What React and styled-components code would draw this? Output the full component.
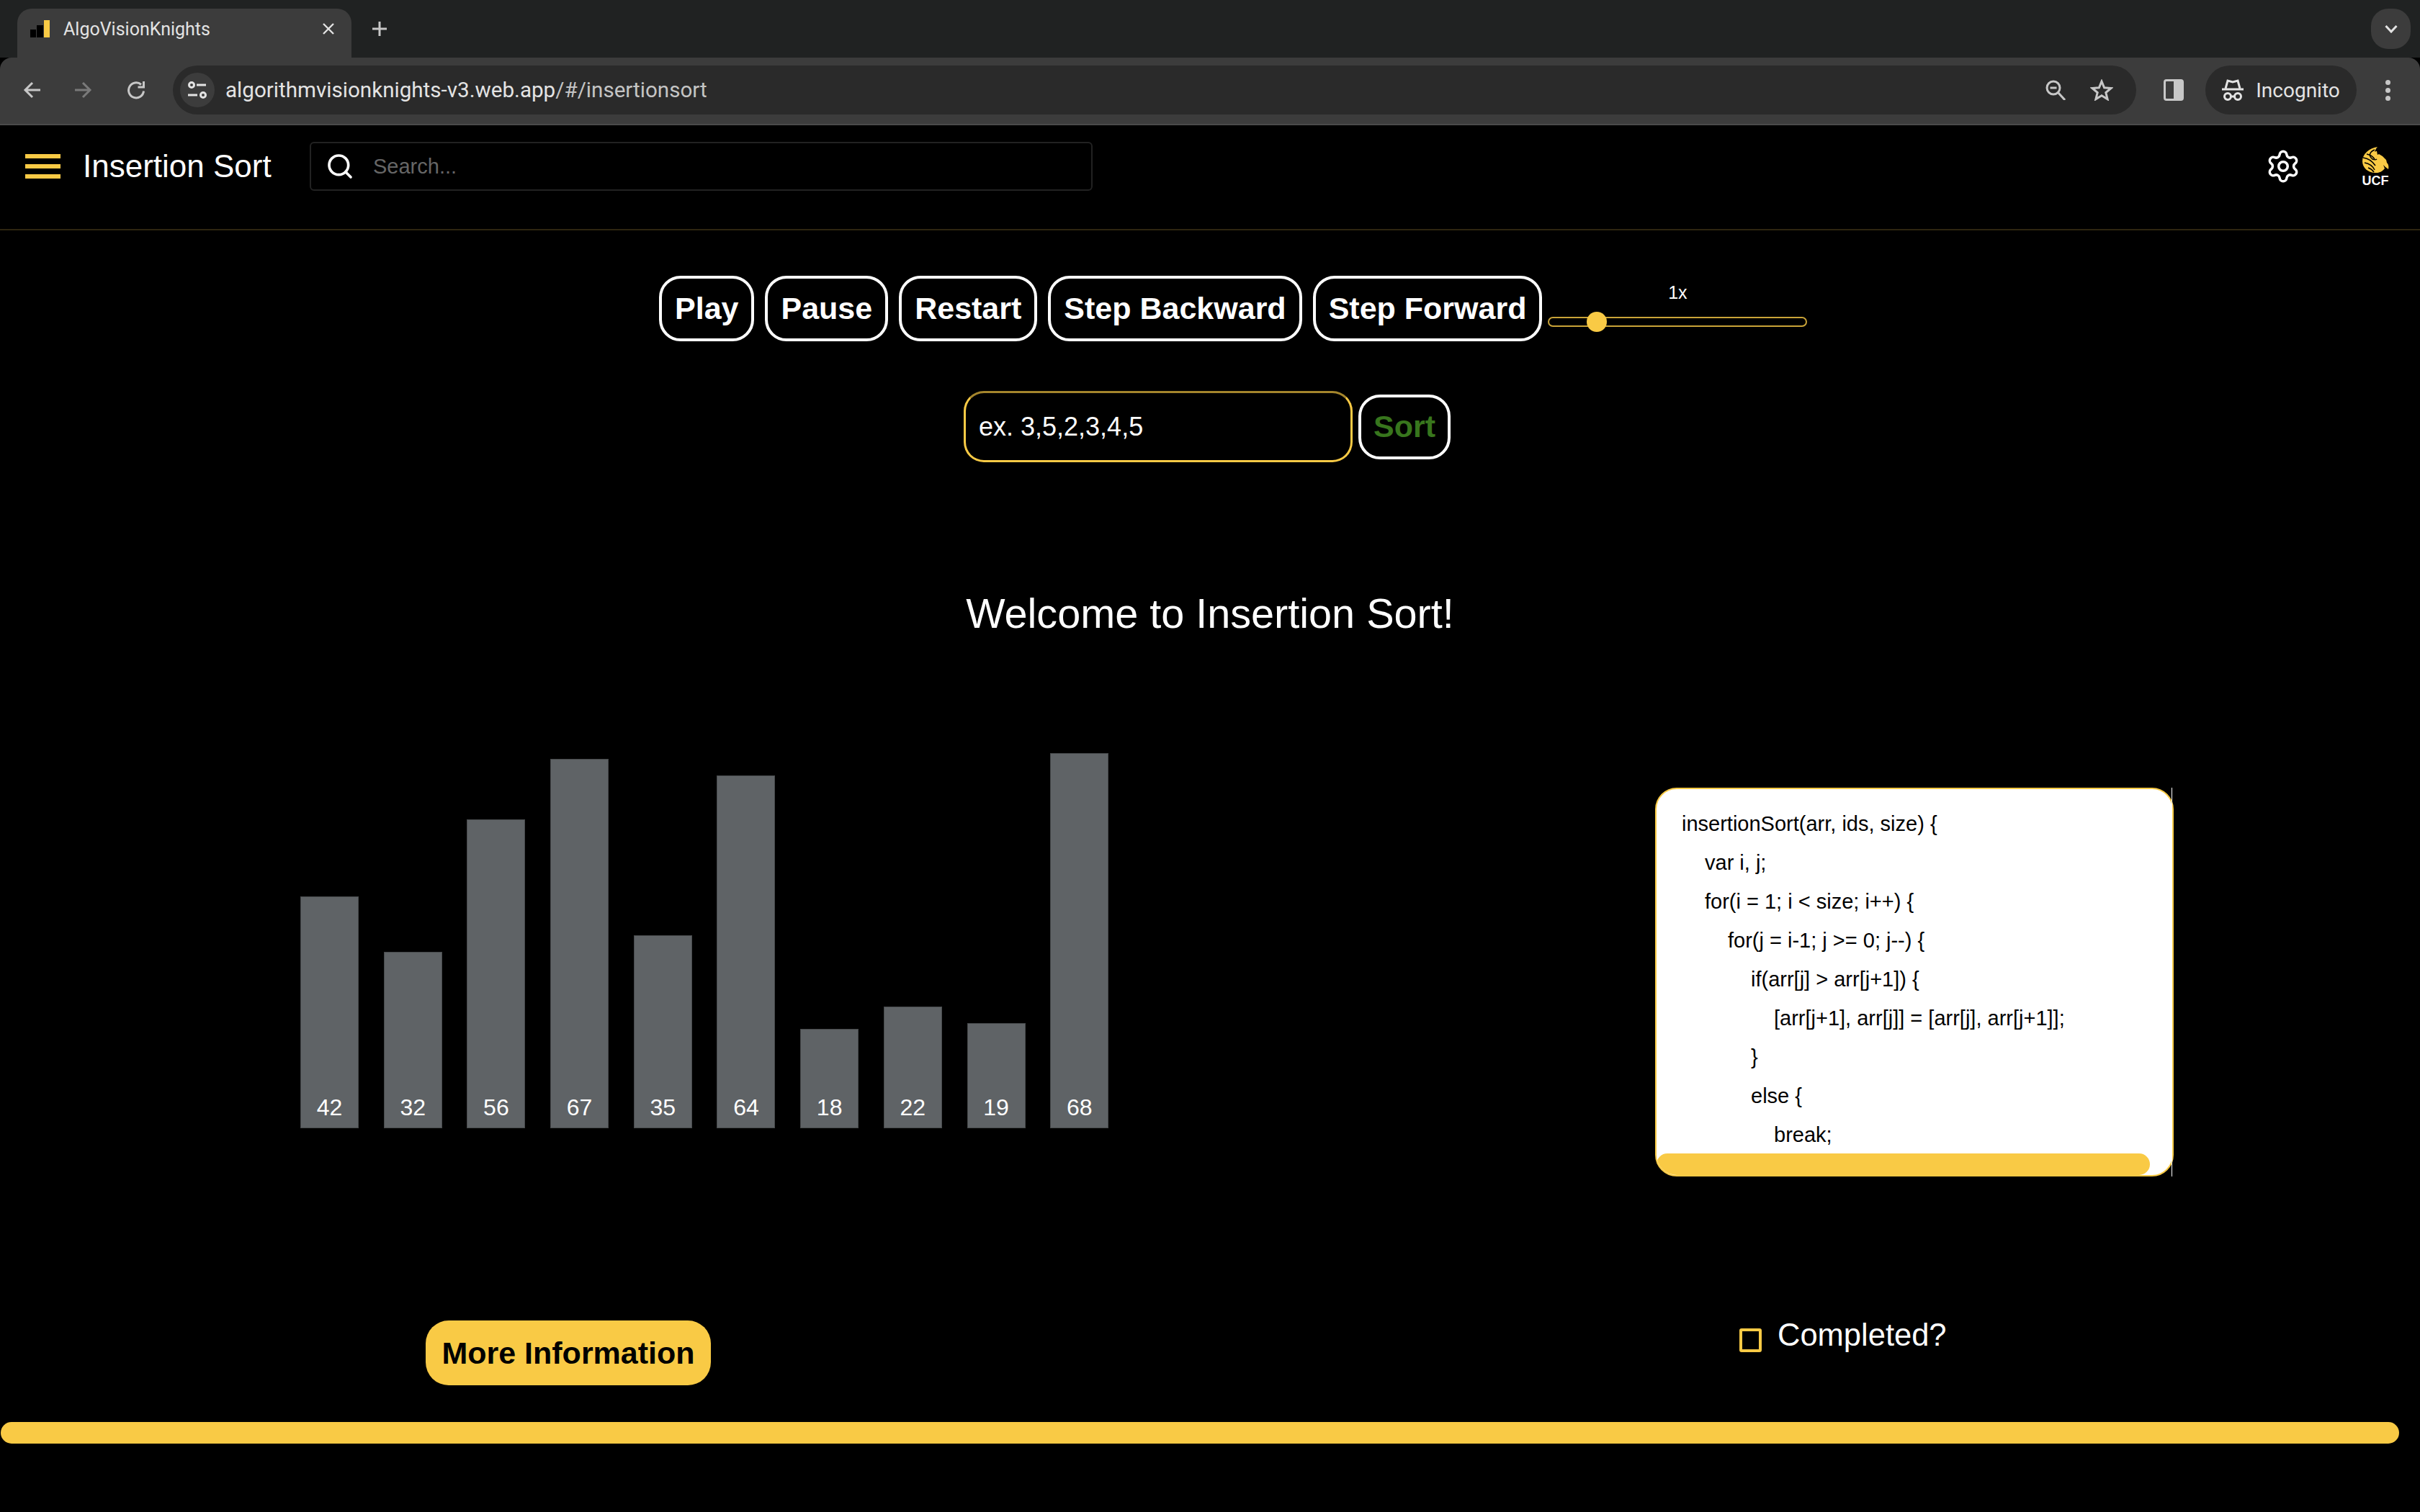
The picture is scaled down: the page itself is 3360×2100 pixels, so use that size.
import React from 'react';
import styled, { createGlobalStyle } from 'styled-components';
import { Search, Settings } from 'lucide-react';

const GOLD = '#f9ca45';
const SANS = '"Liberation Sans", Arial, sans-serif';

const bars = [42, 32, 56, 67, 35, 64, 18, 22, 19, 68];

const codeLines = [
    [0, 'insertionSort(arr, ids, size) {'],
    [1, 'var i, j;'],
    [1, 'for(i = 1; i < size; i++) {'],
    [2, 'for(j = i-1; j >= 0; j--) {'],
    [3, 'if(arr[j] > arr[j+1]) {'],
    [4, '[arr[j+1], arr[j]] = [arr[j], arr[j+1]];'],
    [3, '}'],
    [3, 'else {'],
    [4, 'break;'],
];

const controls = ['Play', 'Pause', 'Restart', 'Step Backward', 'Step Forward'];

function App() {
    return (
        <Page>
            <GlobalStyle />
            <TabStrip>
                <Tab>
                    <svg width="28" height="24" viewBox="0 0 28 24">
                        <rect x="0" y="13" width="8" height="11" fill="#000" />
                        <rect x="9" y="7" width="9" height="17" fill="#000" />
                        <rect x="19" y="0" width="8" height="24" fill={GOLD} />
                    </svg>
                    <TabTitle>AlgoVisionKnights</TabTitle>
                    <svg width="16" height="16" viewBox="0 0 16 16" stroke="#e3e3e3" strokeWidth="2.4">
                        <path d="M1 1l14 14M15 1L1 15" />
                    </svg>
                </Tab>
                <NewTab>
                    <svg width="22" height="22" viewBox="0 0 22 22" stroke="#c7c7c7" strokeWidth="3">
                        <path d="M11 1v20M1 11h20" />
                    </svg>
                </NewTab>
                <TabSearch>
                    <svg width="18" height="12" viewBox="0 0 18 12" fill="none" stroke="#e3e3e3" strokeWidth="3">
                        <path d="M1.500 2l7.500 8 7.500-8" />
                    </svg>
                </TabSearch>
            </TabStrip>
            <Toolbar>
                <NavIcons>
                    <svg width="24" height="24" viewBox="0 0 24 24" fill="none" stroke="#c7c7c7" strokeWidth="3">
                        <path d="M24 12H3M13 2L3 12l10 10" />
                    </svg>
                    <svg width="24" height="24" viewBox="0 0 24 24" fill="none" stroke="#7a7a7a" strokeWidth="3">
                        <path d="M0 12h21M11 2l10 10-10 10" />
                    </svg>
                    <svg width="26" height="26" viewBox="0 0 26 26" fill="none" stroke="#c7c7c7" strokeWidth="3">
                        <path d="M23.500 14.500a10.500 10.500 0 1 1-3.500-9" />
                        <path d="M23.500 1v8h-8" />
                    </svg>
                </NavIcons>
                <AddressBar>
                    <SiteChip>
                        <svg width="26" height="24" viewBox="0 0 26 24" fill="none" stroke="#e3e3e3" strokeWidth="3">
                            <circle cx="5" cy="5" r="3.500" />
                            <path d="M12 5h13M0 19h13" />
                            <circle cx="21" cy="19" r="3.500" />
                        </svg>
                    </SiteChip>
                    <UrlText>
                        algorithmvisionknights-v3.web.app<UrlPath>/#/insertionsort</UrlPath>
                    </UrlText>
                    <svg width="28" height="28" viewBox="0 0 28 28" fill="none" stroke="#c7c7c7" strokeWidth="3">
                        <circle cx="11" cy="11" r="9" />
                        <path d="M6.500 11h9M17.500 17.500L27 28" />
                    </svg>
                    <svg width="32" height="30" viewBox="0 0 32 30" fill="none" stroke="#c7c7c7" strokeWidth="3">
                        <path d="M16 3l3.600 8.800 9.400.7-7.200 6 2.300 9.200-8.100-5-8.100 5 2.300-9.200-7.200-6 9.400-.7z" />
                    </svg>
                </AddressBar>
                <SidePanelIcon>
                    <svg width="28" height="30" viewBox="0 0 28 30">
                        <rect x="1.500" y="1.500" width="25" height="27" rx="2.500" fill="none" stroke="#c7c7c7" strokeWidth="3" />
                        <rect x="14" y="1.500" width="13" height="27" rx="1" fill="#c7c7c7" />
                    </svg>
                </SidePanelIcon>
                <IncognitoChip>
                    <svg width="30" height="32" viewBox="0 0 30 32" fill="none" stroke="#e3e3e3" strokeWidth="3">
                        <path d="M0 15h30" />
                        <path d="M5 14l3-11 7 2 7-2 3 11" />
                        <circle cx="8" cy="25" r="4.500" />
                        <circle cx="22" cy="25" r="4.500" />
                        <path d="M12.500 25h5" />
                    </svg>
                    <ChipText>Incognito</ChipText>
                </IncognitoChip>
                <MenuDots>
                    <Dot />
                    <Dot />
                    <Dot />
                </MenuDots>
            </Toolbar>

            <Header>
                <Hamburger>
                    <span />
                    <span />
                    <span />
                </Hamburger>
                <Title>Insertion Sort</Title>
                <SearchBox>
                    <Search size={40} color="#fff" strokeWidth={2.2} />
                    <SearchText>Search...</SearchText>
                </SearchBox>
                <HeaderRight>
                    <Settings size={50} color="#fff" strokeWidth={1.7} />
                    <UcfLogo>
                        <svg width="37" height="36" viewBox="0 0 37 36">
                            <path fill={GOLD} d="M21 0C9 2 0 10 0 20c0 9 8 16 18 16 6 0 10-2 13-6l-2-5 3 3 4 3c1-4 0-7-2-9l-1-4-5-5-5-3-2 1-1-5c-1 0-2 0-3 1 1-3 2-5 4-7z" />
                            <g fill="none" stroke="#000" strokeWidth="1.500">
                                <path d="M17 4C10 7 8 12 14 17c2 1 5 1 6 0" />
                                <path d="M1 15c7 1 13 5 17 11M3 22c6 1 11 4 14 10M8 29c3 1 6 3 8 6M6 10c5 1 9 4 11 7" />
                            </g>
                            <circle cx="24" cy="6" r="1.200" fill="#000" />
                        </svg>
                        <UcfText>UCF</UcfText>
                    </UcfLogo>
                </HeaderRight>
            </Header>

            <ControlRow>
                {controls.map((label) => (
                    <OutlineButton key={label}>{label}</OutlineButton>
                ))}
                <SpeedControl>
                    <SpeedLabel>1x</SpeedLabel>
                    <SliderTrack>
                        <SliderThumb />
                    </SliderTrack>
                </SpeedControl>
            </ControlRow>

            <SortRow>
                <ArrayInput>ex. 3,5,2,3,4,5</ArrayInput>
                <SortButton>Sort</SortButton>
            </SortRow>

            <Welcome>Welcome to Insertion Sort!</Welcome>

            <VizRow>
                <Chart>
                    {bars.map((value, i) => (
                        <Bar key={i} style={{ height: value * 7.66 }}>
                            {value}
                        </Bar>
                    ))}
                </Chart>
                <CodeFrame>
                    <CodePanel>
                        <CodeBody>
                            {codeLines.map(([indent, text], i) => (
                                <CodeLine key={i} $indent={indent}>
                                    {text}
                                </CodeLine>
                            ))}
                        </CodeBody>
                        <CodeScrollThumb />
                    </CodePanel>
                    <EdgeLine />
                </CodeFrame>
            </VizRow>

            <FooterRow>
                <MoreInfo>More Information</MoreInfo>
                <CompletedGroup>
                    <CheckBox />
                    <CompletedLabel>Completed?</CompletedLabel>
                </CompletedGroup>
            </FooterRow>

            <PageScrollThumb />
        </Page>
    );
}

const GlobalStyle = createGlobalStyle`
    html, body {
        margin: 0;
        padding: 0;
        background: #000;
        overflow: hidden;
    }
`;

const Page = styled.div`
    width: 3360px;
    height: 2100px;
    background: #000;
    color: #fff;
    font-family: ${SANS};
    display: flex;
    flex-direction: column;
    overflow: hidden;
`;

const TabStrip = styled.div`
    height: 80px;
    background: #202222;
    display: flex;
    align-items: flex-end;
    padding-left: 24px;
    padding-right: 13px;
`;

const Tab = styled.div`
    width: 464px;
    height: 68px;
    background: #3c3c3c;
    border-radius: 20px 20px 0 0;
    box-sizing: border-box;
    padding: 0 24px 12px 18px;
    display: flex;
    align-items: center;
    gap: 18px;
`;

const TabTitle = styled.span`
    flex: 1;
    font-family: Roboto, ${SANS};
    font-size: 25px;
    color: #e3e3e3;
`;

const NewTab = styled.div`
    margin-left: 28px;
    height: 68px;
    padding-bottom: 12px;
    box-sizing: border-box;
    display: flex;
    align-items: center;
`;

const TabSearch = styled.div`
    margin-left: auto;
    width: 55px;
    height: 56px;
    align-self: flex-start;
    margin-top: 12px;
    background: #3c3c3c;
    border-radius: 24px;
    display: flex;
    align-items: center;
    justify-content: center;
`;

const Toolbar = styled.div`
    height: 94px;
    box-sizing: border-box;
    background: #3c3c3c;
    border-bottom: 2px solid #4a4a4a;
    border-radius: 16px 16px 0 0;
    padding: 12px 28px 14px 32px;
    display: flex;
    align-items: center;
`;

const NavIcons = styled.div`
    width: 208px;
    display: flex;
    align-items: center;
    gap: 48px;
`;

const AddressBar = styled.div`
    width: 2726px;
    height: 68px;
    box-sizing: border-box;
    flex-shrink: 0;
    background: #2a2a2a;
    border-radius: 34px;
    display: flex;
    align-items: center;
    padding: 0 32px 0 10px;
    gap: 34px;
`;

const SiteChip = styled.div`
    width: 48px;
    height: 48px;
    border-radius: 50%;
    background: #3c3c3c;
    display: flex;
    align-items: center;
    justify-content: center;
    margin-right: -19px;
`;

const UrlText = styled.span`
    flex: 1;
    font-family: Roboto, ${SANS};
    font-size: 29.600px;
    color: #e3e3e3;
`;

const UrlPath = styled.span`
    color: #c4c4c4;
`;

const SidePanelIcon = styled.div`
    margin-left: 38px;
    display: flex;
`;

const IncognitoChip = styled.div`
    margin-left: 30px;
    width: 210px;
    height: 68px;
    box-sizing: border-box;
    background: #2a2a2a;
    border-radius: 34px;
    display: flex;
    align-items: center;
    justify-content: center;
    gap: 17px;
    flex-shrink: 0;
`;

const ChipText = styled.span`
    font-family: Roboto, ${SANS};
    font-size: 28px;
    color: #e3e3e3;
`;

const MenuDots = styled.div`
    margin-left: 40px;
    display: flex;
    flex-direction: column;
    gap: 4px;
`;

const Dot = styled.span`
    width: 7px;
    height: 7px;
    border-radius: 50%;
    background: #c7c7c7;
`;

const Header = styled.div`
    height: 146px;
    box-sizing: border-box;
    border-bottom: 2px solid #2e2610;
    padding: 23px 43px 53px 35px;
    display: flex;
    align-items: center;
`;

const Hamburger = styled.div`
    width: 49px;
    display: flex;
    flex-direction: column;
    gap: 8px;

    span {
        display: block;
        height: 6px;
        background: ${GOLD};
    }
`;

const Title = styled.h1`
    margin: 0 0 0 31px;
    width: 315px;
    font-size: 44px;
    font-weight: 400;
`;

const SearchBox = styled.div`
    width: 1087px;
    height: 68px;
    box-sizing: border-box;
    border: 2px solid #222;
    border-radius: 6px;
    display: flex;
    align-items: center;
    padding-left: 20px;
    gap: 26px;
`;

const SearchText = styled.span`
    font-size: 29px;
    color: #666;
`;

const HeaderRight = styled.div`
    margin-left: auto;
    display: flex;
    align-items: center;
    gap: 84px;
`;

const UcfLogo = styled.div`
    display: flex;
    flex-direction: column;
    align-items: center;
    gap: 2px;
    width: 38px;
    margin-top: 2px;
`;

const UcfText = styled.span`
    font-size: 18px;
    font-weight: 700;
    line-height: 18px;
`;

const ControlRow = styled.div`
    margin-top: 63px;
    padding-left: 915px;
    display: flex;
    align-items: center;
    gap: 15px;
`;

const OutlineButton = styled.button`
    height: 91px;
    box-sizing: border-box;
    padding: 0 18px;
    background: #000;
    color: #fff;
    border: 4px solid #fff;
    border-radius: 30px;
    font-family: ${SANS};
    font-size: 43px;
    font-weight: 700;
    white-space: nowrap;
`;

const SpeedControl = styled.div`
    width: 360px;
    margin-left: -7px;
    display: flex;
    flex-direction: column;
    align-items: center;
    margin-top: -9px;
`;

const SpeedLabel = styled.span`
    font-size: 25px;
    line-height: 28px;
    margin-bottom: 20px;
    margin-top: -2px;
`;

const SliderTrack = styled.div`
    position: relative;
    width: 100%;
    height: 14px;
    box-sizing: border-box;
    border: 2px solid #c9a338;
    border-radius: 7px;
`;

const SliderThumb = styled.span`
    position: absolute;
    left: 52px;
    top: -9px;
    width: 28px;
    height: 28px;
    border-radius: 50%;
    background: ${GOLD};
`;

const SortRow = styled.div`
    margin-top: 69px;
    padding-left: 1338px;
    display: flex;
    align-items: center;
    gap: 8px;
`;

const ArrayInput = styled.div`
    width: 540px;
    height: 99px;
    box-sizing: border-box;
    border: 3px solid ${GOLD};
    border-top-color: #a4852c;
    border-radius: 28px;
    display: flex;
    align-items: center;
    padding-left: 18px;
    font-size: 36px;
`;

const SortButton = styled(OutlineButton)`
    width: 128px;
    height: 90px;
    padding: 0;
    color: #38761d;
`;

const Welcome = styled.h2`
    margin: 175px 0 0;
    text-align: center;
    font-size: 57.6px;
    line-height: 70px;
    font-weight: 400;
`;

const VizRow = styled.div`
    margin-top: 159px;
    height: 521px;
    display: flex;
    align-items: flex-end;
    padding-left: 417px;
`;

const Chart = styled.div`
    width: 1123px;
    display: flex;
    align-items: flex-end;
    gap: 34.700px;
`;

const Bar = styled.div`
    width: 81px;
    flex-shrink: 0;
    box-sizing: border-box;
    background: #5f6366;
    border: 1px solid #474a4c;
    display: flex;
    align-items: flex-end;
    justify-content: center;
    padding-bottom: 9px;
    font-size: 32px;
    line-height: 38px;
`;

const CodeFrame = styled.div`
    position: relative;
    margin-left: 758px;
    width: 720px;
    height: 540px;
    margin-bottom: -67px;
`;

const CodePanel = styled.div`
    position: relative;
    height: 100%;
    box-sizing: border-box;
    background: #fff;
    border: 2px solid ${GOLD};
    border-radius: 30px;
    overflow: hidden;
`;

const CodeBody = styled.div`
    padding: 21px 0 0 35px;
    color: #000;
`;

const CodeLine = styled.div`
    height: 54px;
    line-height: 54px;
    font-size: 29px;
    white-space: nowrap;
    padding-left: ${(props) => props.$indent * 32}px;
`;

const CodeScrollThumb = styled.div`
    position: absolute;
    left: 0;
    bottom: 0;
    width: 685px;
    height: 30px;
    background: ${GOLD};
    border-radius: 15px;
`;

const EdgeLine = styled.div`
    position: absolute;
    right: 2px;
    top: 0;
    bottom: 0;
    width: 1px;
    background: #fff;
`;

const FooterRow = styled.div`
    margin-top: 267px;
    height: 90px;
    display: flex;
    align-items: flex-start;
    padding-left: 591px;
`;

const MoreInfo = styled.button`
    width: 396px;
    height: 90px;
    background: ${GOLD};
    color: #000;
    border: none;
    border-radius: 32px;
    font-family: ${SANS};
    font-size: 43px;
    font-weight: 700;
    padding: 0;
    white-space: nowrap;
`;

const CompletedGroup = styled.label`
    margin-left: 1428px;
    display: flex;
    align-items: flex-start;
    gap: 22px;
`;

const CheckBox = styled.span`
    width: 31px;
    height: 33px;
    margin-top: 11px;
    box-sizing: border-box;
    border: 4px solid ${GOLD};
    border-radius: 3px;
`;

const CompletedLabel = styled.span`
    font-size: 43.500px;
    line-height: 50px;
    margin-top: -5px;
`;

const PageScrollThumb = styled.div`
    margin-top: 51px;
    margin-left: 1px;
    width: 3330px;
    height: 30px;
    border-radius: 15px;
    background: ${GOLD};
`;

export default App;
